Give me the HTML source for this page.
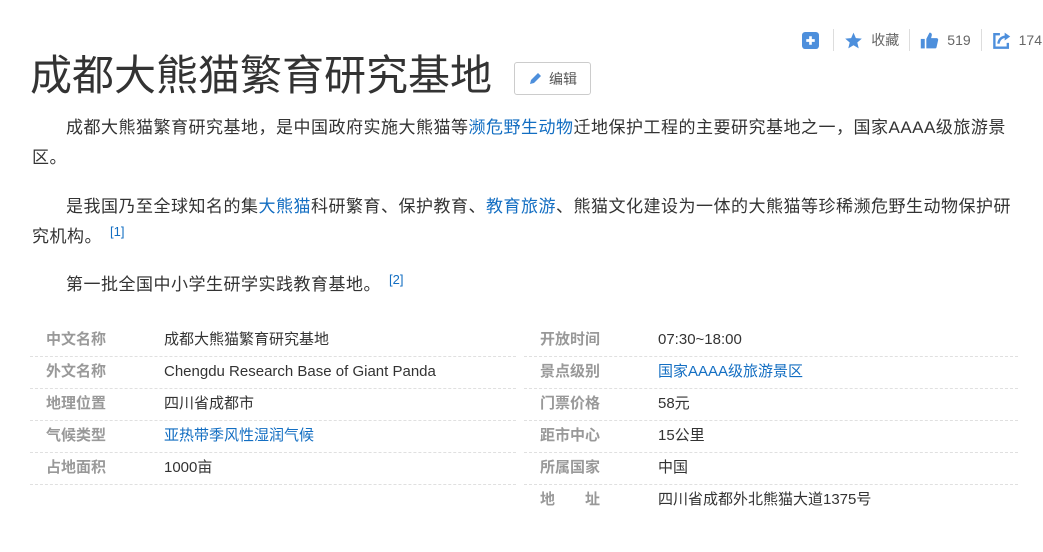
<!DOCTYPE html>
<html><head><meta charset="utf-8"><style>
body{margin:0;background:#fff;font-family:"Liberation Sans","Noto Sans CJK SC",sans-serif;color:#333;width:1043px;height:552px;overflow:hidden;position:relative}
.a{color:#136ec2}
.top{position:absolute;top:28px;right:0;height:24px;display:flex;align-items:center;font-size:14px;color:#666}
.sep{width:1px;height:22px;background:#ddd;margin:0 10px}
h1{position:absolute;left:30px;top:51px;margin:0;font-size:42px;font-weight:normal;color:#333;line-height:50px}
.edit{position:absolute;left:514px;top:62px;width:77px;height:33px;border:1px solid #ccc;border-radius:3px;box-sizing:border-box;font-size:14px;color:#555;display:flex;align-items:center;justify-content:center;gap:7px}
p{position:absolute;left:32px;width:1010px;margin:0;font-size:17px;line-height:30px;text-indent:34px;white-space:nowrap;letter-spacing:0.5px}
sup{font-size:13px;color:#136ec2;vertical-align:6px;margin-left:8px;line-height:0;letter-spacing:0}
.row{position:absolute;height:32px;border-bottom:1px dashed #e0e0e0;width:486px;font-size:15px;line-height:32px}
.row b{position:absolute;left:16px;font-weight:bold;color:#999}
.row span{position:absolute;left:134px}
</style></head><body>
<div class="top">
<svg width="17" height="17" viewBox="0 0 16 16"><rect width="16" height="16" rx="3" fill="#4d8fdc"/><path d="M8 4v8M4 8h8" stroke="#fff" stroke-width="2.5"/></svg>
<div class="sep" style="margin-left:14px"></div>
<svg width="19" height="19" viewBox="0 0 24 24"><path d="M12 2l3 7 7.5.6-5.7 5 1.8 7.4L12 18l-6.6 4 1.8-7.4-5.7-5L9 9z" fill="#4d8fdc"/></svg><span style="margin-left:8px">收藏</span>
<div class="sep"></div>
<svg width="19" height="19" viewBox="0 0 24 24"><rect x="1" y="10" width="5" height="12" fill="#4d8fdc"/><path d="M8 10l4-8c2 0 3 1 3 3l-1 4h7c1 0 2 1 2 2l-2 9c0 1-1 2-2 2H8z" fill="#4d8fdc"/></svg><span style="margin-left:8px">519</span>
<div class="sep"></div>
<svg width="19" height="19" viewBox="0 0 24 24"><path d="M10 4H3v17h17v-6" stroke="#4d8fdc" stroke-width="3" fill="none"/><path d="M8 16c1-6 5-9 11-9" stroke="#4d8fdc" stroke-width="3" fill="none"/><path d="M16 2l7 5-7 5z" fill="#4d8fdc"/></svg><span style="margin-left:8px;margin-right:1px">174</span>
</div>
<h1>成都大熊猫繁育研究基地</h1>
<div class="edit"><svg width="14" height="14" viewBox="0 0 14 14"><path d="M2 12l1-4 7-7 3 3-7 7z" fill="#4d8fdc"/></svg>编辑</div>
<p style="top:113px">成都大熊猫繁育研究基地，是中国政府实施大熊猫等<span class="a">濒危野生动物</span>迁地保护工程的主要研究基地之一，国家AAAA级旅游景<br>区。</p>
<p style="top:192px">是我国乃至全球知名的集<span class="a">大熊猫</span>科研繁育、保护教育、<span class="a">教育旅游</span>、熊猫文化建设为一体的大熊猫等珍稀濒危野生动物保护研<br>究机构。<sup>[1]</sup></p>
<p style="top:270px">第一批全国中小学生研学实践教育基地。<sup>[2]</sup></p>
<div class="row" style="left:30px;top:324px"><b>中文名称</b><span>成都大熊猫繁育研究基地</span></div>
<div class="row" style="left:30px;top:356px"><b>外文名称</b><span>Chengdu Research Base of Giant Panda</span></div>
<div class="row" style="left:30px;top:388px"><b>地理位置</b><span>四川省成都市</span></div>
<div class="row" style="left:30px;top:420px"><b>气候类型</b><span class="a">亚热带季风性湿润气候</span></div>
<div class="row" style="left:30px;top:452px"><b>占地面积</b><span>1000亩</span></div>
<div class="row" style="left:524px;top:324px;width:494px"><b>开放时间</b><span>07:30~18:00</span></div>
<div class="row" style="left:524px;top:356px;width:494px"><b>景点级别</b><span class="a">国家AAAA级旅游景区</span></div>
<div class="row" style="left:524px;top:388px;width:494px"><b>门票价格</b><span>58元</span></div>
<div class="row" style="left:524px;top:420px;width:494px"><b>距市中心</b><span>15公里</span></div>
<div class="row" style="left:524px;top:452px;width:494px"><b>所属国家</b><span>中国</span></div>
<div class="row" style="left:524px;top:484px;border:none"><b>地　　址</b><span>四川省成都外北熊猫大道1375号</span></div>
</body></html>
